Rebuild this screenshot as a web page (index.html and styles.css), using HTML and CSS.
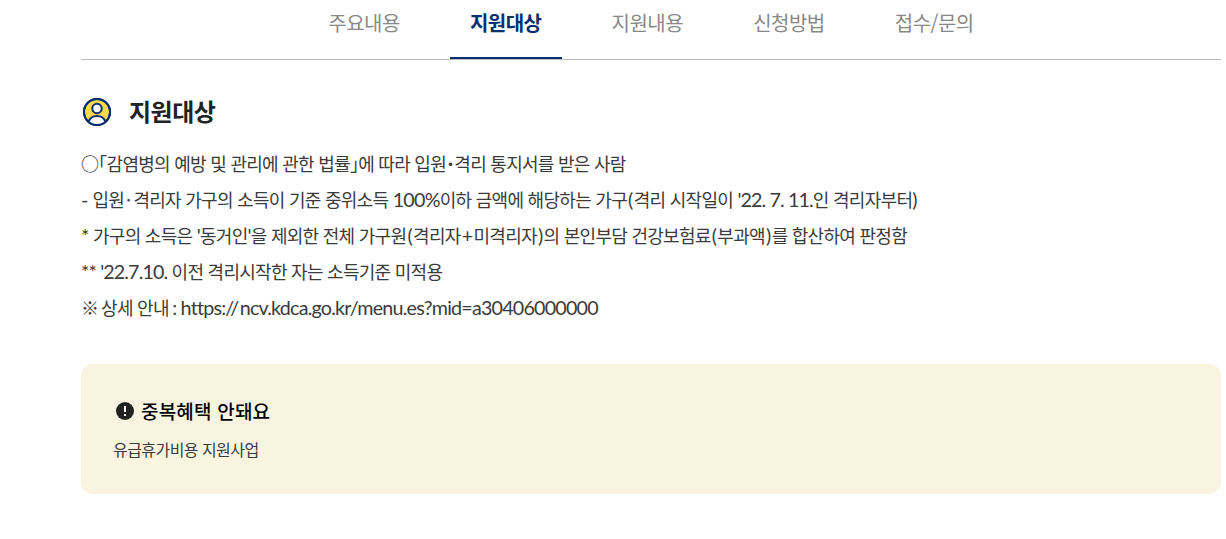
FILE: index.html
```html
<!DOCTYPE html>
<html lang="ko">
<head>
<meta charset="utf-8">
<title>지원대상</title>
<link rel="stylesheet" href="styles.css">
</head>
<body>
<main class="page">
  <nav class="tabs">
    <a class="tab"><span>주요내용</span></a>
    <a class="tab active"><span>지원대상</span></a>
    <a class="tab"><span>지원내용</span></a>
    <a class="tab"><span>신청방법</span></a>
    <a class="tab"><span>접수/문의</span></a>
  </nav>
  <section class="target">
    <h2 class="heading">
      <svg class="user" viewBox="0 0 30 30" width="30" height="30" fill="none" stroke="#06306f" stroke-width="2"><circle cx="15" cy="15" r="13" fill="#ffd94f"/><path d="M6.500 25c1.300-4 4.400-6 8.500-6s7.200 2 8.500 6c-5 4-12 4-17 0z" fill="#fff" stroke="none"/><path d="M6.500 25c1.300-4 4.400-6 8.500-6s7.200 2 8.500 6"/><circle cx="15" cy="11.500" r="4.700" fill="#fff"/><circle cx="15" cy="15" r="13"/></svg>
      <span>지원대상</span>
    </h2>
    <div class="lines">
      <p>○｢감염병의 예방 및 관리에 관한 법률｣에 따라 입원<b>･</b>격리 통지서를 받은 사람</p>
      <p><span class="latin dash">-</span> 입원<span class="dot">·</span>격리자 가구의 소득이 기준 중위소득 <span class="latin">100%</span>이하 금액에 해당하는 가구<span class="latin sign">(</span>격리 시작일이 <span class="latin date">'22. 7. 11.</span>인 격리자부터<span class="latin">)</span></p>
      <p><span class="latin">*</span> 가구의 소득은 <span class="latin">'</span>동거인<span class="latin">'</span>을 제외한 전체 가구원<span class="latin sign">(</span>격리자<span class="latin sign">+</span>미격리자<span class="latin sign">)</span>의 본인부담 건강보험료<span class="latin sign">(</span>부과액<span class="latin sign">)</span>를 합산하여 판정함</p>
      <p><span class="latin date">** '22.7.10.</span> 이전 격리시작한 자는 소득기준 미적용</p>
      <p><span class="mark">※</span> 상세 안내<span class="latin link"> : https:<span class="slashes">//</span>ncv.kdca.go.kr/menu.es?mid=a30406000000</span></p>
    </div>
  </section>
  <aside class="notice">
    <h3 class="notice-title">
      <svg viewBox="0 0 18 18" width="18" height="18"><circle cx="9" cy="9" r="9" fill="#222"/><path d="M9 4v6M9 12v2" stroke="#fff" stroke-width="2"/></svg>
      <span>중복혜택 안돼요</span>
    </h3>
    <p class="notice-text">유급휴가비용 지원사업</p>
  </aside>
</main>
</body>
</html>
```
FILE: styles.css
```css
* { box-sizing: border-box; margin: 0; padding: 0; }
body { background: #fff; color: #3b3b3b; font-family: "Noto Sans CJK KR", sans-serif; overflow: hidden; }
.page { width: 1140px; margin-left: 81px; }
.tabs { display: flex; justify-content: center; gap: 30px; height: 60px; border-bottom: 1px solid #bbb; }
.tab { height: 59px; padding: 8px 20px 0; font-size: 20px; line-height: 29px; letter-spacing: -0.5px; color: #888; white-space: nowrap; }
.active { color: #06306f; font-weight: 700; border-bottom: 2px solid #06306f; }
.heading { display: flex; align-items: center; gap: 17px; height: 36px; margin-top: 34px; padding-left: 1px; font-size: 24px; letter-spacing: -0.5px; color: #222; }
.heading span { padding-bottom: 4px; }
.lines { margin-top: 15px; font-size: 18px; line-height: 36px; letter-spacing: -0.72px; white-space: nowrap; }
.lines p { height: 36px; }
.latin { font-family: Lato, sans-serif; font-size: 19.7px; line-height: 1; }
.sign { padding: 0 1.1px; }
.date { letter-spacing: -0.88px; }
.dash { margin-right: 0.5px; }
.link { letter-spacing: -0.79px; margin-left: -0.8px; }
.slashes { letter-spacing: 0.5px; }
.dot { padding: 0 3px 0 2px; }
.mark { margin-right: -1.5px; }
.notice { height: 130px; margin-top: 39px; padding: 33px 33px; border-radius: 12px; background: #f9f4e0; }
.notice-title { display: flex; align-items: center; gap: 7px; height: 28px; padding-left: 2px; font-size: 19px; font-weight: 500; letter-spacing: 0.2px; color: #000; }
.notice-title span { padding-bottom: 2px; }
.notice-text { margin: 12px 0 0 -1px; font-size: 16px; line-height: 24px; letter-spacing: -0.55px; }
```
